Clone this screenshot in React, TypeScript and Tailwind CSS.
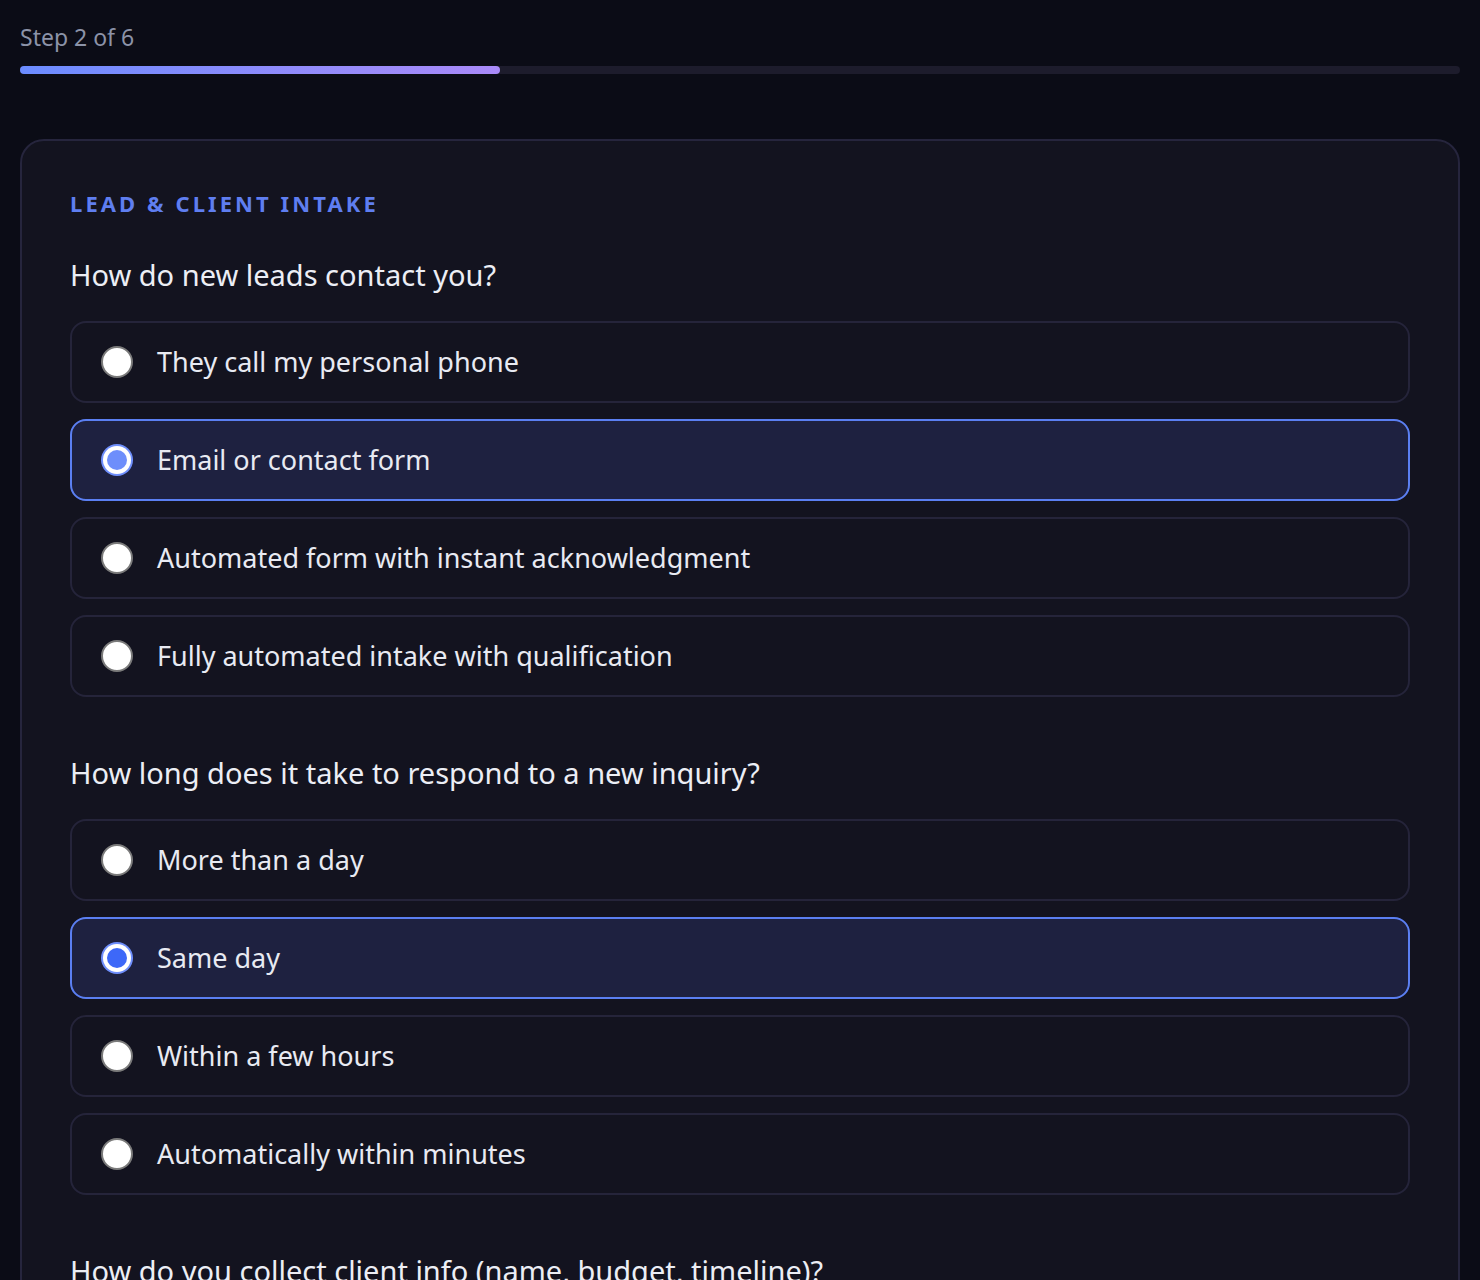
import React from "react";

type Q = { q: string; options: string[]; selected: number; dot: string };

const questions: Q[] = [
  {
    q: "How do new leads contact you?",
    options: [
      "They call my personal phone",
      "Email or contact form",
      "Automated form with instant acknowledgment",
      "Fully automated intake with qualification",
    ],
    selected: 1,
    dot: "bg-[#6e8efb]",
  },
  {
    q: "How long does it take to respond to a new inquiry?",
    options: ["More than a day", "Same day", "Within a few hours", "Automatically within minutes"],
    selected: 1,
    dot: "bg-[#3d68f8]",
  },
  {
    q: "How do you collect client info (name, budget, timeline)?",
    options: ["Over the phone or in person", "Email back and forth", "Online form", "Automated with CRM sync"],
    selected: -1,
    dot: "bg-[#6e8efb]",
  },
];

function Option({ label, selected, dot }: { label: string; selected: boolean; dot: string }) {
  return (
    <div
      className={
        "flex h-[82px] items-center rounded-[16px] border-2 pl-[29px] " +
        (selected ? "border-[#5b7ff2] bg-[#1e2140]" : "border-[#25243a] bg-[#13131f]")
      }
    >
      {selected ? (
        <span className="flex h-[32px] w-[32px] items-center justify-center rounded-full bg-[#6e8efb]">
          <span className="flex h-[28px] w-[28px] items-center justify-center rounded-full bg-white">
            <span className={"h-[20px] w-[20px] rounded-full " + dot} />
          </span>
        </span>
      ) : (
        <span className="h-[32px] w-[32px] rounded-full border-2 border-[#7a7a7a] bg-white" />
      )}
      <span className="ml-[24px] text-[27px] text-[#e8eaf2]">{label}</span>
    </div>
  );
}

export default function App() {
  return (
    <div
      className="min-h-[1280px] bg-[#0b0c16] px-[20px] pt-[21px]"
      style={{ fontFamily: '"Noto Sans", "Open Sans", sans-serif' }}
    >
      <div className="text-[23px] leading-[32px] text-[#8c93a8]">Step 2 of 6</div>
      <div className="mt-[13px] h-[8px] w-full rounded-full bg-[#1d1c2c]">
        <div className="h-full w-1/3 rounded-full bg-gradient-to-r from-[#6b8cff] to-[#a98af8]" />
      </div>
      <div className="mt-[65px] rounded-[24px] border-2 border-[#26253d] bg-[#13131f] px-[48px] pt-[46px] pb-[60px]">
        <div className="text-[22px] font-bold leading-[32px] tracking-[0.14em] text-[#5f7ef0]">
          LEAD &amp; CLIENT INTAKE
        </div>
        <div className="mt-[36px] flex flex-col gap-[56px]">
          {questions.map((qq) => (
            <div key={qq.q}>
              <div className="text-[29px] leading-[40px] text-[#eceef5]">{qq.q}</div>
              <div className="mt-[26px] flex flex-col gap-[16px]">
                {qq.options.map((o, i) => (
                  <Option key={o} label={o} selected={i === qq.selected} dot={qq.dot} />
                ))}
              </div>
            </div>
          ))}
        </div>
      </div>
    </div>
  );
}
